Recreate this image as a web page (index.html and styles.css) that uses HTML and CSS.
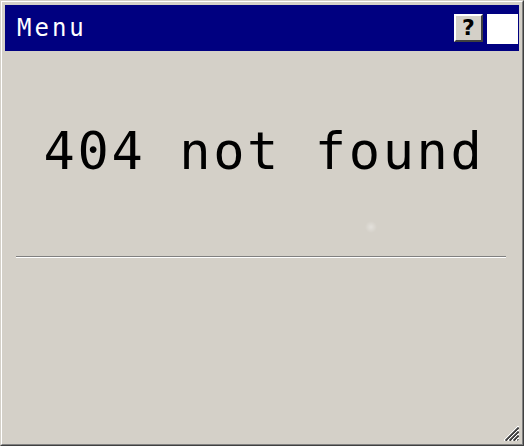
FILE: index.html
```html
<!DOCTYPE html>
<html>
<head>
<meta charset="utf-8">
<link rel="stylesheet" href="styles.css">
</head>
<body>
<div class="window">
  <div class="window-inner">
    <div class="titlebar">
      <span class="title">Menu</span>
      <div class="controls">
        <button class="help-btn">?</button>
        <div class="close-box"></div>
      </div>
    </div>
    <div class="content">
      <h1 class="message">404 not found</h1>
      <div class="separator"></div>
      <div class="spacer"></div>
      <svg class="grip" width="16" height="16" viewBox="0 0 16 16">
        <g stroke-width="1" shape-rendering="crispEdges">
          <line x1="15.5" y1="1" x2="1" y2="15.5" stroke="#ffffff"/>
          <line x1="15.5" y1="2" x2="2" y2="15.5" stroke="#808080"/>
          <line x1="15.5" y1="3" x2="3" y2="15.5" stroke="#404040"/>
          <line x1="15.5" y1="5" x2="5" y2="15.5" stroke="#ffffff"/>
          <line x1="15.5" y1="6" x2="6" y2="15.5" stroke="#808080"/>
          <line x1="15.5" y1="7" x2="7" y2="15.5" stroke="#404040"/>
          <line x1="15.5" y1="9" x2="9" y2="15.5" stroke="#ffffff"/>
          <line x1="15.5" y1="10" x2="10" y2="15.5" stroke="#808080"/>
          <line x1="15.5" y1="11" x2="11" y2="15.5" stroke="#404040"/>
          <line x1="15.5" y1="13" x2="13" y2="15.5" stroke="#ffffff"/>
          <line x1="15.5" y1="14" x2="14" y2="15.5" stroke="#808080"/>
        </g>
      </svg>
    </div>
  </div>
</div>
</body>
</html>
```
FILE: styles.css
```css
html, body {
  margin: 0;
  padding: 0;
  background: #d4d0c8;
}

.window {
  box-sizing: border-box;
  width: 524px;
  height: 446px;
  border-style: solid;
  border-width: 1px;
  border-color: #d4d0c8 #404040 #404040 #d4d0c8;
  background: #d4d0c8;
}

.window-inner {
  box-sizing: border-box;
  height: 100%;
  border-style: solid;
  border-width: 1px;
  border-color: #ffffff #808080 #808080 #ffffff;
  padding: 3px 3px 3px 3px;
  display: flex;
  flex-direction: column;
}

.titlebar {
  height: 46px;
  background: #000080;
  display: flex;
  align-items: center;
  justify-content: space-between;
  padding: 0 1px 0 12px;
  flex-shrink: 0;
}

.title {
  font-family: "DejaVu Sans Mono", monospace;
  font-size: 24px;
  letter-spacing: 3px;
  color: #ffffff;
  margin-top: 0;
}

.controls {
  display: flex;
  align-items: flex-start;
  gap: 4px;
  margin-top: 1px;
}

.help-btn {
  box-sizing: border-box;
  width: 29px;
  height: 28px;
  padding: 0;
  margin: 0;
  background: #d4d0c8;
  border-style: solid;
  border-width: 2px;
  border-color: #ffffff #404040 #404040 #ffffff;
  font-family: "DejaVu Sans", sans-serif;
  font-weight: bold;
  font-size: 22px;
  line-height: 22px;
  color: #000000;
}

.close-box {
  width: 31px;
  height: 30px;
  background: #ffffff;
}

.content {
  flex: 1;
  display: flex;
  flex-direction: column;
  position: relative;
  background: radial-gradient(circle at 366px 176px, rgba(255,255,255,0.35) 0, rgba(255,255,255,0) 6px), #d4d0c8;
}

.message {
  margin: 70px 0 0 0;
  text-align: center;
  font-family: "DejaVu Sans Mono", monospace;
  font-weight: normal;
  font-size: 52px;
  line-height: 60px;
  letter-spacing: 2.6px;
  color: #000000;
  padding-left: 4px;
}

.separator {
  margin: 75px 13px 0 11px;
  border-top: 1px solid #808080;
  border-bottom: 1px solid #ffffff;
  height: 0;
}

.spacer {
  flex: 1;
}

.grip {
  position: absolute;
  right: 0;
  bottom: 0;
}
```
